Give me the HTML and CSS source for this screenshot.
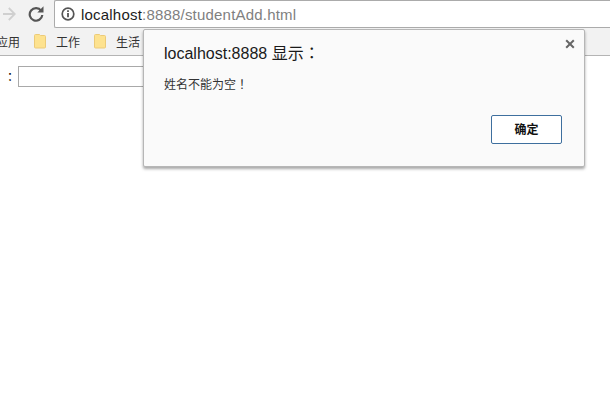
FILE: index.html
```html
<!DOCTYPE html>
<html lang="zh">
<head>
<meta charset="utf-8">
<title>studentAdd</title>
<link rel="stylesheet" href="styles.css">
</head>
<body>
<header class="chrome">
  <div class="toolbar">
    <svg class="nav-icon forward" viewBox="0 0 13 14" width="13" height="14"><path d="M0 7H11.500M5.800 1l6 6-6 6" fill="none" stroke="#d0d0d0" stroke-width="1.800"/></svg>
    <svg class="nav-icon reload" viewBox="0 0 16 16" width="16" height="16"><path d="M13.200 4.800A6.300 6.300 0 1 0 14.300 9" fill="none" stroke="#555" stroke-width="2.200"/><path d="M9.300 6.500H15.500V.3z" fill="#555"/></svg>
    <div class="omnibox">
      <svg class="info" viewBox="0 0 14 14" width="14" height="14"><circle cx="7" cy="7" r="5.800" fill="none" stroke="#555" stroke-width="1.700"/><path d="M7 6v4.300M7 3.300v1.700" stroke="#555" stroke-width="1.800"/></svg>
      <span class="host">localhost</span><span class="rest">:8888/studentAdd.html</span>
    </div>
  </div>
  <nav class="bookmarks">
    <span class="mark apps">应用</span>
    <span class="mark work"><svg class="folder" viewBox="0 0 12 15" width="12" height="15"><path d="M.5 1.500a1 1 0 0 1 1-1h4l1 1h4a1 1 0 0 1 1 1v10.500a1 1 0 0 1-1 1h-9a1 1 0 0 1-1-1z" fill="#fde28f" stroke="#eccb78"/></svg>工作</span>
    <span class="mark"><svg class="folder" viewBox="0 0 12 15" width="12" height="15"><path d="M.5 1.500a1 1 0 0 1 1-1h4l1 1h4a1 1 0 0 1 1 1v10.500a1 1 0 0 1-1 1h-9a1 1 0 0 1-1-1z" fill="#fde28f" stroke="#eccb78"/></svg>生活</span>
  </nav>
</header>
<main class="page">
  <span class="label" lang="zh-TW">：</span><input class="name" type="text">
</main>
<div class="dialog" role="alertdialog">
  <svg class="close" viewBox="0 0 10 10" width="10" height="10"><path d="M1.200 1.200l7.600 7.600M8.800 1.200L1.200 8.800" stroke="#666" stroke-width="2"/></svg>
  <h1 class="dialog-title">localhost:8888 显示<span class="punct" lang="zh-TW">：</span></h1>
  <p class="dialog-msg">姓名不能为空<span class="punct" lang="zh-TW">！</span></p>
  <div class="dialog-actions"><button class="ok" type="button">确定</button></div>
</div>
</body>
</html>
```
FILE: styles.css
```css
html, body { margin: 0; padding: 0; background: #fff; overflow: hidden; }
body { width: 610px; height: 400px; font-family: "Liberation Sans", "Noto Sans CJK SC", sans-serif; color: #000; }
.chrome { background: #f2f2f2; border-bottom: 1px solid #b4b4b4; height: 55px; }
.toolbar { height: 28px; display: flex; align-items: center; }
.nav-icon { flex: none; }
.forward { margin-left: 3px; }
.reload { margin-left: 12px; margin-right: 10px; }
.omnibox { flex: 1; align-self: flex-start; height: 28px; box-sizing: border-box; background: #fff; border: 1px solid #ababab; border-right: 0; border-radius: 2px 0 0 2px; display: flex; align-items: center; padding-left: 6px; font-size: 15px; letter-spacing: .2px; }
.info { margin-right: 6px; flex: none; }
.host { color: #1c1c1c; }
.rest { color: #808080; }
.bookmarks { height: 27px; display: flex; align-items: center; font-size: 12px; color: #333; }
.mark { display: flex; align-items: center; }
.apps { margin-left: -4px; width: 38px; }
.work { width: 60px; }
.folder { margin-right: 10px; }
.page { padding-top: 10px; height: 21px; display: flex; align-items: center; font-size: 12px; }
.label { width: 14px; margin-left: 4px; flex: none; font-family: "Noto Sans CJK TC", sans-serif; }
.name { width: 140px; height: 21px; box-sizing: border-box; border: 1px solid #a9a9a9; padding: 0; margin: 0; background: #fff; }
.dialog { position: absolute; left: 143px; top: 29px; width: 442px; height: 138px; box-sizing: border-box; background: #fafafa; border: 1px solid #b6b6b6; border-radius: 2px; box-shadow: 0 2px 3px rgba(0,0,0,.35); padding: 15px 22px 0 20px; }
.close { position: absolute; top: 9px; right: 9px; }
.dialog-title { margin: 0; font-size: 16px; font-weight: 400; line-height: 18px; color: #1a1a1a; }
.dialog-msg { margin: 14px 0 0; font-size: 12px; line-height: 16px; color: #333; }
.punct { font-family: "Noto Sans CJK TC", sans-serif; line-height: 0; }
.dialog-actions { display: flex; justify-content: flex-end; margin-top: 22px; }
.ok { width: 71px; height: 29px; box-sizing: border-box; background: #fff; border: 1px solid #3e6f9e; border-radius: 2px; font: 700 12px "Liberation Sans", "Noto Sans CJK SC", sans-serif; color: #111; padding: 0 0 2px; }
```
